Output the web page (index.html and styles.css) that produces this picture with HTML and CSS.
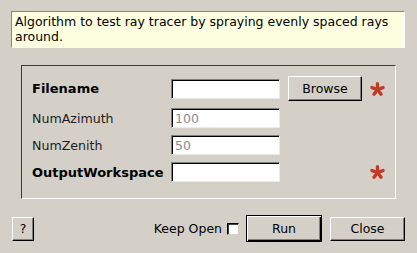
FILE: index.html
```html
<!DOCTYPE html>
<html lang="en">
<head>
  <meta charset="UTF-8">
  <title>CreateTestRays</title>
  <link rel="stylesheet" href="styles.css">
</head>
<body>
  <!-- Algorithm description -->
  <div class="description">Algorithm to test ray tracer by spraying evenly spaced rays around.</div>

  <!-- Properties -->
  <div class="group">
    <div class="form">
      <label class="bold">Filename</label>
      <input type="text" class="field">
      <button class="btn browse">Browse</button>
      <svg class="star" width="15" height="14" viewBox="0 0 15 14">
        <g stroke="#c23a28" stroke-width="3.4" stroke-linecap="round">
          <line x1="7.5" y1="7.5" x2="7.5" y2="1.8"/>
          <line x1="7.5" y1="7.5" x2="13" y2="5.6"/>
          <line x1="7.5" y1="7.5" x2="11" y2="12.2"/>
          <line x1="7.5" y1="7.5" x2="4" y2="12.2"/>
          <line x1="7.5" y1="7.5" x2="2" y2="5.6"/>
        </g>
      </svg>

      <label>NumAzimuth</label>
      <input type="text" class="field" placeholder="100">
      <span></span>
      <span></span>

      <label>NumZenith</label>
      <input type="text" class="field" placeholder="50">
      <span></span>
      <span></span>

      <label class="bold">OutputWorkspace</label>
      <input type="text" class="field">
      <span></span>
      <svg class="star" width="15" height="14" viewBox="0 0 15 14">
        <g stroke="#c23a28" stroke-width="3.4" stroke-linecap="round">
          <line x1="7.5" y1="7.5" x2="7.5" y2="1.8"/>
          <line x1="7.5" y1="7.5" x2="13" y2="5.6"/>
          <line x1="7.5" y1="7.5" x2="11" y2="12.2"/>
          <line x1="7.5" y1="7.5" x2="4" y2="12.2"/>
          <line x1="7.5" y1="7.5" x2="2" y2="5.6"/>
        </g>
      </svg>
    </div>
  </div>

  <!-- Dialog buttons -->
  <div class="footer">
    <button class="btn help">?</button>
    <span class="spacer"></span>
    <span class="keep">Keep Open</span>
    <span class="check"></span>
    <button class="btn run">Run</button>
    <button class="btn close">Close</button>
  </div>
</body>
</html>
```

FILE: styles.css
```css
/* General */
body {
  margin: 0;
  width: 417px;
  height: 253px;
  background: #d4d0c8;
  font-family: 'DejaVu Sans', sans-serif;
  font-size: 12.5px;
  color: #000;
  overflow: hidden;
}

/* Description box */
.description {
  box-sizing: border-box;
  margin: 11px 0 0 11px;
  width: 394px;
  height: 37px;
  padding: 2px 3px;
  line-height: 15px;
  background: #fefee1;
  border: 1px solid;
  border-color: #8a8883 #fff #fff #8a8883;
}

/* Group box */
.group {
  box-sizing: border-box;
  margin: 17px 0 0 21px;
  width: 375px;
  height: 134px;
  padding: 10px 0 0 10px;
  border: 1px solid;
  border-color: #3a3a3a #fff #fff #3a3a3a;
}

.form {
  display: grid;
  grid-template-columns: 131px 109px 74px 15px;
  grid-template-rows: 25px 20px 20px 20px;
  column-gap: 8px;
  row-gap: 7px;
  align-items: center;
}

.form label {
  color: #1c1c1c;
  font-size: 12.6px;
}

.form label.bold {
  font-weight: bold;
  font-size: 13px;
  color: #000;
}

.field {
  box-sizing: border-box;
  width: 109px;
  height: 20px;
  margin: 0;
  padding: 0 3px;
  font-family: 'DejaVu Sans', sans-serif;
  font-size: 12.5px;
  background: #fff;
  border: 1px solid;
  border-color: #808080 #ecebe8 #ecebe8 #808080;
  box-shadow: inset 1px 1px 0 #000;
  outline: none;
}

.field::placeholder {
  color: #8c8c8c;
}

.star {
  display: block;
}

/* Buttons */
.btn {
  box-sizing: border-box;
  margin: 0;
  padding: 0;
  font-family: 'DejaVu Sans', sans-serif;
  font-size: 12.5px;
  color: #000;
  background: #d4d0c8;
  border: 1px solid;
  border-color: #fff #000 #000 #fff;
  box-shadow: inset -1px -1px 0 #808080;
}

.browse {
  width: 74px;
  height: 25px;
}

/* Footer */
.footer {
  display: flex;
  align-items: center;
  margin-top: 16px;
  padding: 0 12px;
  height: 27px;
}

.help {
  width: 22px;
  height: 24px;
}

.spacer {
  flex: 1;
}

.keep {
  margin-right: 5px;
}

.check {
  box-sizing: border-box;
  width: 12px;
  height: 12px;
  margin-right: 7px;
  background: #fff;
  border: 1px solid;
  border-color: #000 #d4d0c8 #d4d0c8 #000;
  box-shadow: inset 1px 1px 0 #404040;
}

.run {
  width: 76px;
  height: 27px;
  margin-right: 8px;
  border: 1px solid #000;
  box-shadow: inset 1px 1px 0 #fff, inset -1px -1px 0 #000, inset -2px -2px 0 #808080;
}

.close {
  width: 75px;
  height: 24px;
}
```
